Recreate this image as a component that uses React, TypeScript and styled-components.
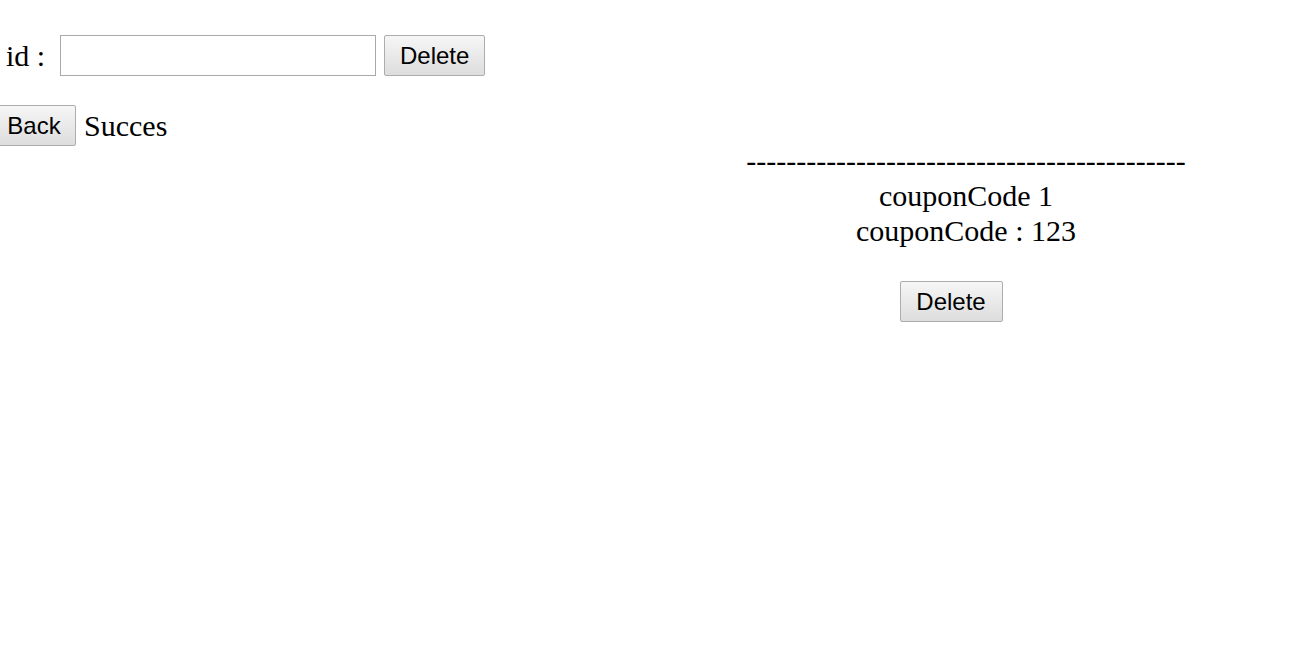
import React, { useState } from "react";
import styled, { createGlobalStyle } from "styled-components";

const GlobalStyle = createGlobalStyle`
  body {
    margin: 0;
    background: #ffffff;
    color: #000000;
    font-family: "Liberation Serif", "Times New Roman", serif;
    font-size: 30px;
  }
`;

const Page = styled.div`
  padding-top: 35px;
`;

const FormRow = styled.form`
  display: flex;
  align-items: center;
  padding-left: 6px;
`;

const Label = styled.label`
  margin-right: 15px;
`;

const IdInput = styled.input`
  box-sizing: border-box;
  width: 316px;
  height: 41px;
  border: 1px solid #a9a9a9;
  margin: 0 8px 0 0;
  padding: 2px 6px;
  font-size: 24px;
  font-family: "Liberation Sans", Arial, sans-serif;
`;

const Button = styled.button<{ $width: number }>`
  box-sizing: border-box;
  width: ${(p) => p.$width}px;
  height: 41px;
  margin: 0;
  padding: 0;
  border: 1px solid #adadad;
  border-radius: 2px;
  background: linear-gradient(#f6f6f6, #dddddd);
  color: #000000;
  font-family: "Liberation Sans", Arial, sans-serif;
  font-size: 24px;
  cursor: pointer;
`;

const StatusRow = styled.div`
  display: flex;
  align-items: center;
  margin-top: 29px;
  margin-left: -8px;
  gap: 8px;
`;

const Columns = styled.div`
  display: grid;
  grid-template-columns: 632px 1fr;
  margin-top: -3px;
`;

const Coupon = styled.div`
  display: flex;
  flex-direction: column;
  align-items: center;
  line-height: 35px;
`;

const Line = styled.div`
  white-space: nowrap;
`;

const CouponActions = styled.div`
  margin-top: 33px;
  margin-right: 30px;
`;

type CouponItem = { id: number; couponCode: string };

export default function App() {
  const [id, setId] = useState("");
  const coupons: CouponItem[] = [{ id: 1, couponCode: "123" }];

  return (
    <Page>
      <GlobalStyle />
      <FormRow onSubmit={(e) => e.preventDefault()}>
        <Label htmlFor="id">id :</Label>
        <IdInput id="id" value={id} onChange={(e) => setId(e.target.value)} />
        <Button type="submit" $width={101}>
          Delete
        </Button>
      </FormRow>
      <StatusRow>
        <Button type="button" $width={84}>
          Back
        </Button>
        <span>Succes</span>
      </StatusRow>
      <Columns>
        <div />
        <div>
          {coupons.map((c) => (
            <Coupon key={c.id}>
              <Line>{"-".repeat(44)}</Line>
              <Line>couponCode {c.id}</Line>
              <Line>couponCode : {c.couponCode}</Line>
              <CouponActions>
                <Button type="button" $width={103}>
                  Delete
                </Button>
              </CouponActions>
            </Coupon>
          ))}
        </div>
      </Columns>
    </Page>
  );
}
